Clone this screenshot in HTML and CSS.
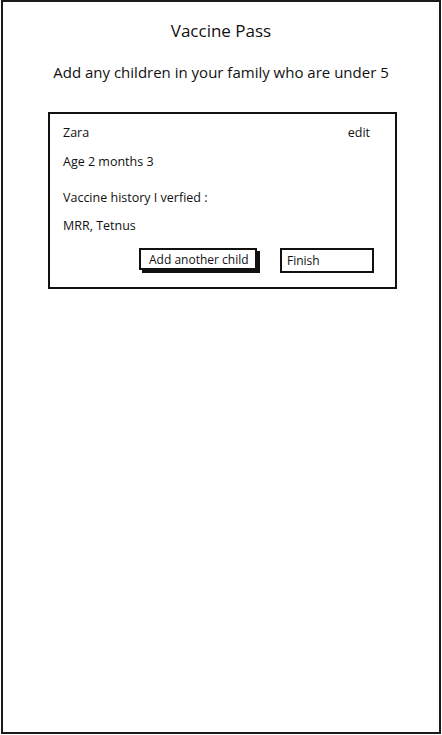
FILE: index.html
```html
<!DOCTYPE html>
<html>
<head>
<meta charset="utf-8">
<link rel="stylesheet" href="styles.css">
</head>
<body>
<div class="frame">
  <h1 class="title">Vaccine Pass</h1>
  <p class="subtitle">Add any children in your family who are under 5</p>
  <div class="card">
    <div class="row">
      <span>Zara</span>
      <span class="edit">edit</span>
    </div>
    <div class="line age">Age 2 months 3</div>
    <div class="line history">Vaccine history I verfied :</div>
    <div class="line vaccines">MRR, Tetnus</div>
    <div class="actions">
      <div class="btn btn-add">Add another child</div>
      <div class="btn btn-finish">Finish</div>
    </div>
  </div>
</div>
</body>
</html>
```
FILE: styles.css
```css
html, body {
  margin: 0;
  padding: 0;
  background: #fff;
}
body {
  font-family: "Open Sans", "DejaVu Sans", sans-serif;
  color: #111;
}
.frame {
  box-sizing: border-box;
  margin-left: 1px;
  width: 440px;
  height: 734px;
  border: 2px solid #1a1a1a;
  padding-top: 19px;
}
.title {
  margin: 0;
  font-size: 17px;
  font-weight: 400;
  line-height: 20px;
  text-align: center;
}
.subtitle {
  margin: 21px 0 0;
  font-size: 15px;
  line-height: 20px;
  text-align: center;
}
.card {
  box-sizing: border-box;
  margin: 30px 0 0 45px;
  width: 349px;
  height: 177px;
  border: 2px solid #111;
  padding: 11px 25px 0 13px;
  font-size: 12.5px;
  line-height: 16px;
}
.row {
  display: flex;
  justify-content: space-between;
}
.age { margin-top: 13px; }
.history { margin-top: 20px; }
.vaccines { margin-top: 12px; }
.actions {
  display: flex;
  margin-top: 14px;
  padding-left: 76px;
  gap: 23px;
}
.btn {
  flex-shrink: 0;
  box-sizing: border-box;
  height: 22px;
  border: 2px solid #111;
  padding-top: 1px;
  line-height: 18px;
  font-size: 12px;
}
.btn-add {
  width: 118px;
  padding-left: 8px;
  box-shadow: 3px 3px 0 #111;
}
.btn-finish {
  width: 94px;
  height: 25px;
  line-height: 20px;
  padding-left: 5px;
}
```
